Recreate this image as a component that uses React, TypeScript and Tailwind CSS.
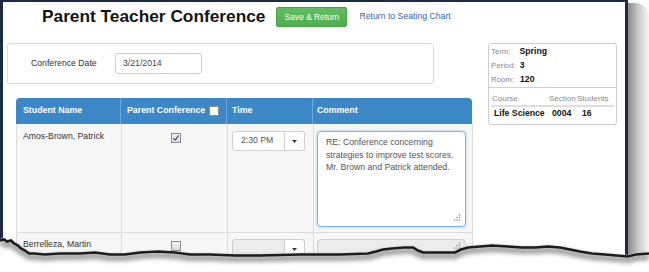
import React from 'react';

const EDGE =
  'M0 239 L4 238 L7 240 L11 239 L14 242 L18 244 L21 247 L25 249 L29 252 L34 252 L45 253 L60 252 L80 252 L95 251 L110 253 L125 253 L140 251 L158 250 L175 251 L190 253 L210 253 L235 254 L260 254 L300 253 L340 253 L368 252 L376 250 L383 248 L392 247 L404 246 L413 246 L418 249 L423 251 L440 251 L455 251 L461 248 L468 246 L480 245 L492 244 L508 245 L522 246 L535 246 L548 245 L560 246 L570 248 L580 250 L592 252 L605 253 L628 255 L636 253 L649 252';

function TornEdge() {
  return (
    <svg className="pointer-events-none absolute left-0 top-0" width="649" height="272" viewBox="0 0 649 272">
      <defs>
        <filter id="soft" x="-5%" y="-50%" width="110%" height="200%">
          <feGaussianBlur stdDeviation="2.2" />
        </filter>
        <filter id="hard" x="-5%" y="-50%" width="110%" height="200%">
          <feGaussianBlur stdDeviation="0.6" />
        </filter>
      </defs>
      <path d={`${EDGE} L649 272 L0 272 Z`} fill="#ffffff" />
      <path d={EDGE} transform="translate(0 5)" fill="none" stroke="#a0a0a0" strokeWidth="6" filter="url(#soft)" />
      <path d={EDGE} transform="translate(0 1.5)" fill="none" stroke="#1e1e1e" strokeWidth="2.6" filter="url(#hard)" />
    </svg>
  );
}

function Checkbox({ checked, white }: { checked?: boolean; white?: boolean }) {
  return (
    <span
      className={`inline-flex h-[10px] w-[10px] items-center justify-center border border-[#8c8c8c] ${
        white ? 'bg-white' : 'bg-gradient-to-b from-[#f6f6f6] to-[#d9d9d9]'
      }`}
    >
      {checked && (
        <svg viewBox="0 0 10 10" className="h-[8px] w-[8px]">
          <path d="M1.8 5.2 L4 7.6 L8.2 1.8" fill="none" stroke="#2d4f9a" strokeWidth="1.5" />
        </svg>
      )}
    </span>
  );
}

function Caret() {
  return (
    <svg viewBox="0 0 5 3" className="h-[3px] w-[5px]">
      <path d="M0 0 L5 0 L2.5 3 Z" fill="#333" />
    </svg>
  );
}

function Grip() {
  return (
    <svg viewBox="0 0 8 8" className="absolute bottom-[4px] right-[4px] h-[8px] w-[8px]">
      {[
        [6.5, 1],
        [4, 3.5],
        [6.5, 3.5],
        [1.5, 6],
        [4, 6],
        [6.5, 6],
      ].map(([x, y], i) => (
        <rect key={i} x={x - 0.7} y={y - 0.7} width="1.4" height="1.4" fill="#9a9a9a" />
      ))}
    </svg>
  );
}

function TimePicker({ value, disabled }: { value?: string; disabled?: boolean }) {
  return (
    <div className="flex h-[20px]">
      <div
        className={`flex w-[53px] items-center rounded-l-[3px] border border-[#cfcfcf] pl-[8px] text-[8.7px] text-[#555] ${
          disabled ? 'bg-[#ececec]' : 'bg-white'
        }`}
      >
        {value}
      </div>
      <div className="flex w-[20px] items-center justify-center rounded-r-[3px] border border-l-0 border-[#cfcfcf] bg-white">
        <Caret />
      </div>
    </div>
  );
}

function InfoPanel() {
  const top = [
    { label: 'Term:', value: 'Spring', gap: 'ml-[9px]' },
    { label: 'Period:', value: '3', gap: 'ml-[4px]' },
    { label: 'Room:', value: '120', gap: 'ml-[6px]' },
  ];
  return (
    <div className="ml-[16px] h-[82px] w-[129px] rounded-[3px] border border-[#cdcdcd] bg-white">
      <div className="pl-[2px] pt-[1px]">
        {top.map((r) => (
          <div key={r.label} className="flex h-[14px] items-center">
            <span className="text-[7.8px] text-[#8a8a8a]">{r.label}</span>
            <span className={`${r.gap} text-[8.7px] font-bold text-[#111]`}>{r.value}</span>
          </div>
        ))}
      </div>
      <div className="border-t border-[#cfcfcf] px-[2px] pt-[5px]">
        <div className="grid h-[14px] grid-cols-[57px_28px_1fr] items-center border-b-2 border-[#dedede] pl-[1px] text-[8px] text-[#8a8a8a]">
          <span>Course</span>
          <span>Section</span>
          <span>Students</span>
        </div>
        <div className="grid h-[13px] grid-cols-[58px_30px_1fr] items-center pl-[3px] text-[8.7px] font-bold text-[#111]">
          <span>Life Science</span>
          <span>0004</span>
          <span>16</span>
        </div>
      </div>
    </div>
  );
}

export default function App() {
  return (
    <div className="relative h-[272px] w-[649px] overflow-hidden bg-white font-['Liberation_Sans',Arial,sans-serif] text-[#333]">
      <div className="flex h-full">
        <div className="h-full w-[628px] border-l-[3px] border-r-[3px] border-t-2 border-[#1c2a44] bg-white">
          <div className="mt-[5px] flex h-[20px] items-center pl-[39px]">
            <h1 className="text-[17.3px] font-bold leading-none text-[#141414]">Parent Teacher Conference</h1>
            <button className="ml-[11px] h-[20px] w-[71px] rounded-[2px] border border-[#48a048] bg-gradient-to-b from-[#62bd62] to-[#4eae4e] text-[8.4px] text-white">
              Save &amp; Return
            </button>
            <a className="ml-[12px] text-[8.7px] text-[#2f6cb3]">Return to Seating Chart</a>
          </div>

          <div className="mt-[16px] flex">
            <div className="ml-[4px] w-[465px]">
              <div className="flex h-[41px] w-[427px] items-center rounded-[3px] border border-[#dcdcdc] bg-white pl-[23px]">
                <span className="w-[84px] text-[8.7px] text-[#333]">Conference Date</span>
                <div className="flex h-[21px] w-[87px] items-center rounded-[3px] border border-[#cfcfcf] bg-white pl-[7px] text-[8.7px] text-[#444]">
                  3/21/2014
                </div>
              </div>

              <div className="ml-[9px] mt-[14px] w-[456px]">
                <div className="grid h-[26px] grid-cols-[105px_106px_86px_159px] rounded-t-[4px] bg-[#3c87c8] text-[8.8px] font-bold text-white">
                  <div className="flex items-center border-r border-[#6ea7da] pl-[7px]">Student Name</div>
                  <div className="flex items-center border-r border-[#6ea7da] pl-[6px]">
                    Parent Conference
                    <span className="ml-[4px] flex">
                      <Checkbox white />
                    </span>
                  </div>
                  <div className="flex items-center border-r border-[#6ea7da] pl-[5px]">Time</div>
                  <div className="flex items-center pl-[4px]">Comment</div>
                </div>

                <div className="grid grid-cols-[105px_106px_86px_159px] border-l border-[#dcdcdc] bg-[#f7f7f7] text-[8.7px] text-[#333]">
                  <div className="h-[109px] border-b border-r border-[#dcdcdc] pl-[6px] pt-[7px] leading-[11px]">Amos-Brown, Patrick</div>
                  <div className="flex justify-center border-b border-r border-[#dcdcdc] pl-[3px] pt-[9px]">
                    <Checkbox checked />
                  </div>
                  <div className="border-b border-r border-[#dcdcdc] pl-[4px] pt-[7px]">
                    <TimePicker value="2:30 PM" />
                  </div>
                  <div className="border-b border-r border-[#dcdcdc] pl-[3px] pt-[7px]">
                    <div className="relative h-[96px] w-[149px] whitespace-nowrap rounded-[4px] border border-[#7ab4e6] bg-white pl-[8px] pt-[4px] text-[8.7px] leading-[12.5px] text-[#555] shadow-[0_0_3px_rgba(102,175,233,0.6)]">
                      RE: Conference concerning
                      <br />
                      strategies to improve test scores.
                      <br />
                      Mr. Brown and Patrick attended.
                      <Grip />
                    </div>
                  </div>

                  <div className="h-[40px] border-r border-[#dcdcdc] pl-[6px] pt-[6px] leading-[11px]">Berrelleza, Martin</div>
                  <div className="flex justify-center border-r border-[#dcdcdc] pl-[3px] pt-[8px]">
                    <Checkbox />
                  </div>
                  <div className="border-r border-[#dcdcdc] pl-[4px] pt-[6px]">
                    <TimePicker disabled />
                  </div>
                  <div className="border-r border-[#dcdcdc] pl-[3px] pt-[6px]">
                    <div className="relative h-[16px] w-[149px] rounded-[4px] border border-[#d0d0d0] bg-[#ececec]">
                      <Grip />
                    </div>
                  </div>
                </div>
              </div>
            </div>

            <InfoPanel />
          </div>
        </div>
        <div className="mt-[3px] w-[21px] rounded-tr-[14px] bg-gradient-to-r from-[#8a8a8a] via-[#cbcbcb] to-[#f7f7f7]" />
      </div>
      <TornEdge />
    </div>
  );
}
